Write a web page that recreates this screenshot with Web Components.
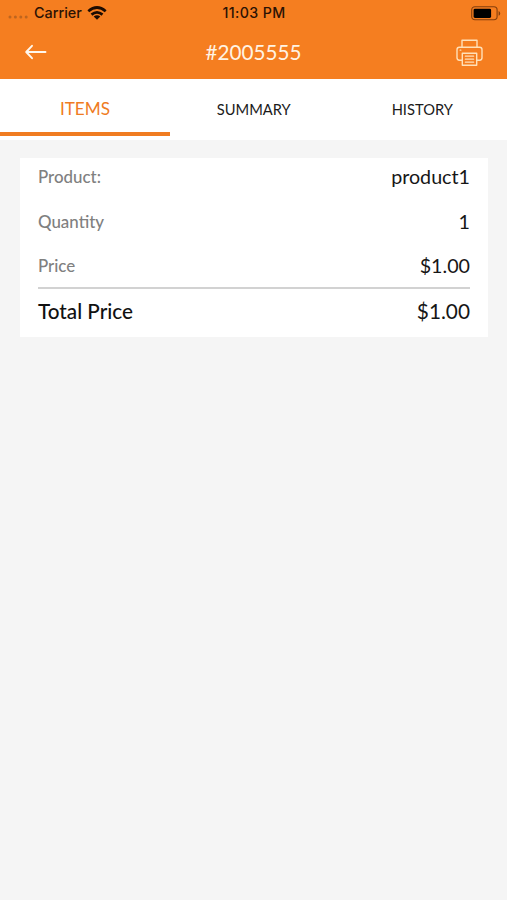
<!DOCTYPE html>
<html lang="en">
<head>
<meta charset="utf-8">
<title>Order #2005555</title>
<style>
html,body{margin:0;height:100%;background:#f5f5f5}
</style>
</head>
<body>
<order-screen></order-screen>
<script>
const define = (name, html) => customElements.define(name, class extends HTMLElement {
  constructor() {
    super();
    const t = document.createElement('template');
    t.innerHTML = html;
    this.attachShadow({ mode: 'open' }).append(t.content.cloneNode(true));
  }
});

define('status-bar', `
<style>
:host{display:grid;grid-template-columns:1fr auto 1fr;align-items:center;height:26px;padding:0 6px 0 8px;box-sizing:border-box;color:#2b1204;font:500 14.4px/26px Inter,"Liberation Sans",sans-serif}
.left{display:flex;align-items:center}
.dots{width:22px;height:4px;margin:8px 4px 0 0;display:block}
.wifi{margin-left:5px;display:block}
.time{font-weight:500;font-size:14.2px;letter-spacing:.4px;margin-right:1px}
.battery{justify-self:end;display:block}
</style>
<div class="left">
<svg class="dots" viewBox="0 0 22 4" fill="#bd651f"><circle cx="2" cy="2" r="1.5"/><circle cx="7.4" cy="2" r="1.5"/><circle cx="12.8" cy="2" r="1.5"/><circle cx="18.2" cy="2" r="1.5"/></svg>
<span>Carrier</span>
<svg class="wifi" width="20" height="14" viewBox="0 0 20 14" fill="none" stroke="#1c0c02" stroke-width="2.7"><path d="M1.3 5.2Q10-2.2 18.7 5.2M4.5 8.6Q10 4 15.5 8.6"/><path d="M10 13.8L6.7 10.6Q10 8 13.3 10.6Z" fill="#1c0c02" stroke="none"/></svg>
</div>
<span class="time">11:03 PM</span>
<svg class="battery" width="30" height="15" viewBox="0 0 30 15"><rect x=".7" y=".8" width="25.4" height="13" rx="3.2" fill="none" stroke="#843f0c" stroke-width="1.1"/><rect x="2.6" y="2.7" width="17.5" height="9.3" rx="1.4" fill="#000"/><path d="M27.6 5v4.8q1.6-.8 1.6-2.4T27.6 5Z" fill="#843f0c"/></svg>
`);

define('nav-bar', `
<style>
:host{display:grid;grid-template-columns:1fr auto 1fr;align-items:center;height:53px;padding:0 24px;box-sizing:border-box;color:#fff3e3;font:400 20.7px/53px Lato,sans-serif}
svg{display:block}
.back{margin-top:-1px}
.print{justify-self:end}
</style>
<svg class="back" width="24" height="18" viewBox="0 0 24 18" fill="none" stroke="#fff7ed" stroke-width="1.9" stroke-linecap="round" stroke-linejoin="round"><path d="M21.5 9H2.6M8 2.8L2.2 9L8 15.2"/></svg>
<slot></slot>
<svg class="print" width="27" height="28" viewBox="0 0 27 28" fill="none" stroke="#ffe0b8" stroke-width="1.4" stroke-linejoin="round" stroke-linecap="round"><path d="M6 8V1.2H21V8"/><path d="M6.2 21.2H3.3Q1 21.2 1 18.8V10.8Q1 8.3 3.3 8.3H23.7Q26 8.3 26 10.8V18.8Q26 21.2 23.7 21.2H20.8"/><path d="M6.3 14.2H20.7V26.3H6.3Z"/><path d="M9.4 17.2H17.6M9.4 20.2H17.6M9.4 23.2H17.6" stroke-width="1.3"/><path d="M4.2 11.2H4.8" stroke-width="1.3"/></svg>
`);

define('tab-item', `
<style>
:host{display:flex;box-sizing:border-box;height:57px;justify-content:center;align-items:center;padding:6px 1px 0 0;border-bottom:4px solid transparent;font:400 14.7px/20px Lato,sans-serif;color:#1b1b1b}
:host([active]){color:#ef7b22;border-color:#f07c21;font-size:17.2px;padding:7px 0 0}
</style><slot></slot>`);

define('tab-strip', `
<style>:host{display:grid;grid-template-columns:170px 1fr 1fr;height:61px;background:#fff}</style>
<slot></slot>`);

define('detail-row', `
<style>
:host{display:flex;justify-content:space-between;align-items:center;height:44.4px;color:#161616;font:400 19.7px/24px Lato,sans-serif}
.label{color:#808080;font-size:16.9px;font-weight:500;padding-top:2px}
.value{padding-top:2px}
:host([total]){height:44px;font-size:20.8px}
:host([total]) .value{padding:0}
:host([total]) .label{color:#111;font-size:20.7px;font-weight:500;padding:0}
</style>
<span class="label"><slot name="label"></slot></span><span class="value"><slot></slot></span>`);

define('detail-card', `
<style>
:host{display:block;box-sizing:border-box;height:179px;margin:18px 19px 0 20px;padding:0 18px;background:#fff;overflow:hidden}
.rows{margin-top:-4px}
hr{height:1.5px;border:0;margin:0;background:#d2d2d2}
</style>
<div class="rows"><slot></slot><hr><slot name="total"></slot></div>`);

define('order-screen', `
<style>
:host{display:block;min-height:900px;background:#f5f5f5}
header{background:#f57e20}
</style>
<header><status-bar></status-bar><nav-bar>#2005555</nav-bar></header>
<tab-strip><tab-item active>ITEMS</tab-item><tab-item>SUMMARY</tab-item><tab-item>HISTORY</tab-item></tab-strip>
<detail-card>
<detail-row><span slot="label">Product:</span>product1</detail-row>
<detail-row><span slot="label">Quantity</span>1</detail-row>
<detail-row><span slot="label">Price</span>$1.00</detail-row>
<detail-row total slot="total"><span slot="label">Total Price</span>$1.00</detail-row>
</detail-card>`);
</script>
</body>
</html>
